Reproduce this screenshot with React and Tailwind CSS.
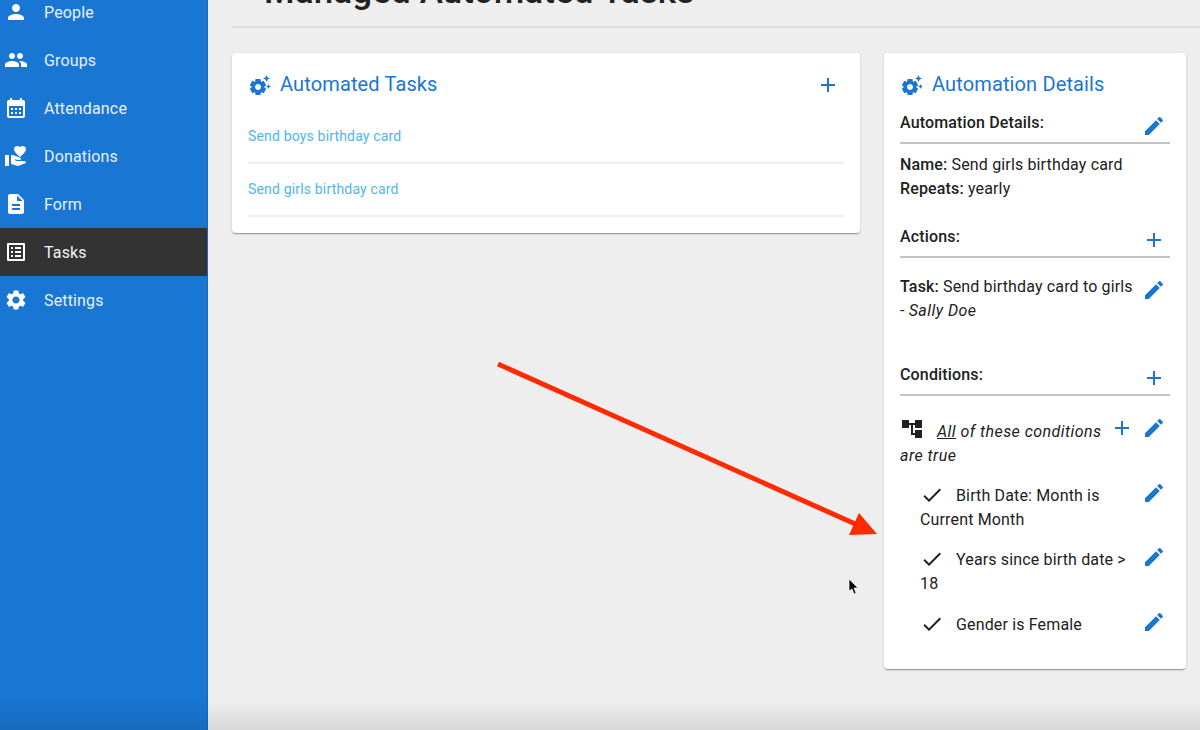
import {
  MdAccountTree,
  MdAdd,
  MdCalendarMonth,
  MdCheck,
  MdDescription,
  MdEdit,
  MdGroup,
  MdListAlt,
  MdPerson,
  MdSettings,
  MdSettingsSuggest,
  MdVolunteerActivism,
} from "react-icons/md";

const navItems = [
  { label: "People", icon: MdPerson },
  { label: "Groups", icon: MdGroup },
  { label: "Attendance", icon: MdCalendarMonth },
  { label: "Donations", icon: MdVolunteerActivism },
  { label: "Form", icon: MdDescription },
  { label: "Tasks", icon: MdListAlt, active: true },
  { label: "Settings", icon: MdSettings },
];

const cardClass =
  "bg-white rounded shadow-[0_2px_1px_-1px_rgba(0,0,0,0.2),0_1px_1px_0_rgba(0,0,0,0.14),0_1px_3px_0_rgba(0,0,0,0.12)]";

const Sidebar = () => (
  <nav className="w-[208px] shrink-0 bg-[#1976d2] border-r border-[#1669bd] -mt-[12px] mb-[-12px]">
    {navItems.map(({ label, icon: Icon, active }) => (
      <div
        key={label}
        className={`flex items-center h-12 pl-1 gap-4 text-base tracking-[0.15px] ${
          active ? "bg-[#333333] text-[#f2f2f2]" : "text-[#e8f1fa]"
        }`}
      >
        <Icon size={24} className="text-white" />
        <span className="mt-[2px]">{label}</span>
      </div>
    ))}
  </nav>
);

const CardTitle = ({ children }) => (
  <div className="flex items-center h-8 gap-2 text-[#1976d2] text-xl tracking-[0.13px]">
    <MdSettingsSuggest size={24} />
    <span className="mb-[2px]">{children}</span>
  </div>
);

const SectionHeader = ({ title, icon: Icon }) => (
  <div className="flex justify-between h-[34px] border-b-2 border-[#c4c4c4] font-medium">
    <span className="pt-px">{title}</span>
    <Icon size={24} className="text-[#1976d2] mt-1 mr-1" />
  </div>
);

const ConditionRow = ({ children, spacing = "mt-4" }) => (
  <div className={`flex justify-between pl-5 ${spacing}`}>
    <div className="w-[210px]">
      <MdCheck size={24} className="inline-block align-top -mt-px mr-3" />
      {children}
    </div>
    <MdEdit size={24} className="text-[#1976d2] -mt-[3px] mr-1" />
  </div>
);

const TasksCard = () => (
  <div className={`${cardClass} px-4 pt-4 pb-4 self-start`}>
    <div className="flex items-center justify-between">
      <CardTitle>Automated Tasks</CardTitle>
      <MdAdd size={24} className="text-[#1976d2] mr-1" />
    </div>
    <div className="mt-[10px] text-sm tracking-[0.17px] text-[#4db6ec]">
      <div className="flex items-center h-[53px] pb-[2px] border-b-2 border-[#eeeeee]">
        Send boys birthday card
      </div>
      <div className="flex items-center h-[53px] pb-[2px] border-b-2 border-[#eeeeee]">
        Send girls birthday card
      </div>
    </div>
  </div>
);

const DetailsCard = () => (
  <div className={`${cardClass} px-4 pt-4 pb-[32px] text-[#212121] text-base leading-6 tracking-[0.15px]`}>
    <CardTitle>Automation Details</CardTitle>

    <div className="mt-[9px]">
      <SectionHeader title="Automation Details:" icon={MdEdit} />
      <div className="mt-[9px]">
        <b className="font-medium">Name:</b> Send girls birthday card
        <br />
        <b className="font-medium">Repeats:</b> yearly
      </div>
    </div>

    <div className="mt-[23px]">
      <SectionHeader title="Actions:" icon={MdAdd} />
      <div className="flex justify-between mt-[17px]">
        <div className="w-[238px]">
          <b className="font-medium">Task:</b> Send birthday card to girls -{" "}
          <i className="tracking-[0.45px]">Sally Doe</i>
        </div>
        <MdEdit size={24} className="text-[#1976d2] mt-[3px] mr-1" />
      </div>
    </div>

    <div className="mt-[39px]">
      <SectionHeader title="Conditions:" icon={MdAdd} />
      <div className="flex justify-between mt-[24px]">
        <div className="w-[206px] italic tracking-[0.45px]">
          <MdAccountTree size={24} className="inline-block align-top -mt-[3px] mr-[13px]" />
          <u>All</u> of these conditions are true
        </div>
        <div className="flex gap-2 -mt-[4px] mr-1">
          <MdAdd size={24} className="text-[#1976d2]" />
          <MdEdit size={24} className="text-[#1976d2]" />
        </div>
      </div>
      <ConditionRow>Birth Date: Month is Current Month</ConditionRow>
      <ConditionRow>Years since birth date &gt; 18</ConditionRow>
      <ConditionRow spacing="mt-[17px]">Gender is Female</ConditionRow>
    </div>
  </div>
);

const App = () => (
  <div
    className="relative flex h-[730px] overflow-hidden bg-[#eeeeee]"
    style={{ fontFamily: "Roboto, sans-serif" }}
  >
    <Sidebar />

    <main className="flex-1 pl-6 pr-[14px]">
      <div className="h-[28px] -mr-[14px] border-b-2 border-[#dddddd] relative">
        <h1 className="absolute left-8 -top-[30px] text-[35px] leading-[44px] font-medium tracking-[0.1px] text-[#212121] whitespace-nowrap">
          Managed Automated Tasks
        </h1>
      </div>
      <div className="grid grid-cols-[628px_302px] gap-6 mt-[25px]">
        <TasksCard />
        <DetailsCard />
      </div>
    </main>

    {/* annotation drawn on top of the recording */}
    <svg className="absolute inset-0 pointer-events-none" width="1200" height="730">
      <line x1="498" y1="364" x2="862" y2="527" stroke="#ff2a00" strokeWidth="5" />
      <polygon points="859,513 877,534 849,535" fill="#ff2a00" />
      <path
        d="M849 579 L849 591 L852 589 L854 594 L856 593 L854 588 L858 588 Z"
        fill="#000"
        stroke="#fff"
        strokeWidth="0.7"
      />
    </svg>

    <div className="absolute inset-x-0 bottom-0 h-[30px] pointer-events-none bg-gradient-to-b from-transparent to-[rgba(0,0,0,0.09)]" />
  </div>
);

export default App;
